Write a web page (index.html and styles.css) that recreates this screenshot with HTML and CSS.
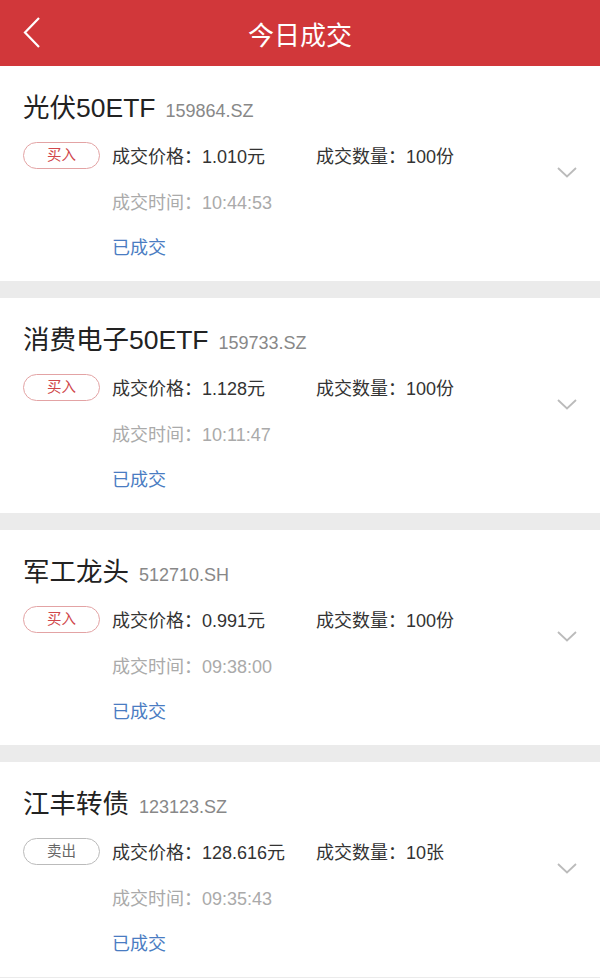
FILE: index.html
```html
<!DOCTYPE html>
<html lang="zh-CN">
<head>
  <meta charset="UTF-8" />
  <meta name="viewport" content="width=device-width, initial-scale=1.0" />
  <title>今日成交</title>
  <link rel="stylesheet" href="styles.css">
</head>
<body>
  <div class="topbar">
    <a class="back" href="#">
      <svg width="20" height="32" viewBox="0 0 20 32"><polyline points="16,1 2,15.5 16,30" fill="none" stroke="#fff" stroke-width="2.2"/></svg>
    </a>
    <h1>今日成交</h1>
    <span></span>
  </div>

  <div class="deal">
    <div class="deal-main">
      <div class="deal-title"><span class="name">光伏50ETF</span><span class="code">159864.SZ</span></div>
      <div class="deal-row"><span class="side buy">买入</span><span class="price">成交价格：1.010元</span><span>成交数量：100份</span></div>
      <div class="deal-row sub time">成交时间：10:44:53</div>
      <div class="deal-row sub status">已成交</div>
    </div>
    <svg class="more" width="20" height="11" viewBox="0 0 20 11"><polyline points="1,1 10,9.5 19,1" fill="none" stroke="#bbb" stroke-width="1.8"/></svg>
  </div>

  <div class="deal">
    <div class="deal-main">
      <div class="deal-title"><span class="name">消费电子50ETF</span><span class="code">159733.SZ</span></div>
      <div class="deal-row"><span class="side buy">买入</span><span class="price">成交价格：1.128元</span><span>成交数量：100份</span></div>
      <div class="deal-row sub time">成交时间：10:11:47</div>
      <div class="deal-row sub status">已成交</div>
    </div>
    <svg class="more" width="20" height="11" viewBox="0 0 20 11"><polyline points="1,1 10,9.5 19,1" fill="none" stroke="#bbb" stroke-width="1.8"/></svg>
  </div>

  <div class="deal">
    <div class="deal-main">
      <div class="deal-title"><span class="name">军工龙头</span><span class="code">512710.SH</span></div>
      <div class="deal-row"><span class="side buy">买入</span><span class="price">成交价格：0.991元</span><span>成交数量：100份</span></div>
      <div class="deal-row sub time">成交时间：09:38:00</div>
      <div class="deal-row sub status">已成交</div>
    </div>
    <svg class="more" width="20" height="11" viewBox="0 0 20 11"><polyline points="1,1 10,9.5 19,1" fill="none" stroke="#bbb" stroke-width="1.8"/></svg>
  </div>

  <div class="deal">
    <div class="deal-main">
      <div class="deal-title"><span class="name">江丰转债</span><span class="code">123123.SZ</span></div>
      <div class="deal-row"><span class="side sell">卖出</span><span class="price">成交价格：128.616元</span><span>成交数量：10张</span></div>
      <div class="deal-row sub time">成交时间：09:35:43</div>
      <div class="deal-row sub status">已成交</div>
    </div>
    <svg class="more" width="20" height="11" viewBox="0 0 20 11"><polyline points="1,1 10,9.5 19,1" fill="none" stroke="#bbb" stroke-width="1.8"/></svg>
  </div>
</body>
</html>
```

FILE: styles.css
```css
body {
  margin: 0;
  font-family: "Liberation Sans", "Noto Sans CJK SC", sans-serif;
  background-color: #ebebeb;
  color: #333;
}
.topbar {
  height: 66px;
  background-color: #d1373a;
  display: grid;
  grid-template-columns: 66px 1fr 66px;
  align-items: center;
}
.back {
  display: flex;
  padding-left: 23px;
}
.topbar h1 {
  margin: 0;
  text-align: center;
  color: #fff;
  font-size: 26px;
  font-weight: normal;
}
.deal {
  background-color: #fff;
  display: flex;
  align-items: center;
  padding: 27px 23px 21px 23px;
  margin-bottom: 17px;
}
.deal-main {
  flex: 1;
}
.deal-title {
  height: 30px;
  line-height: 30px;
  white-space: nowrap;
}
.name {
  font-size: 26.5px;
  color: #222;
}
.code {
  font-size: 18px;
  color: #888;
  margin-left: 10px;
}
.deal-row {
  display: flex;
  align-items: center;
  height: 28px;
  margin-top: 18px;
  font-size: 18px;
  white-space: nowrap;
}
.deal-row.sub {
  padding-left: 89px;
}
.deal-row.status {
  margin-top: 17px;
}
.side {
  box-sizing: border-box;
  width: 77px;
  height: 27px;
  border-radius: 14px;
  border: 1px solid #e3a3a4;
  color: #d0474b;
  font-size: 14.5px;
  line-height: 25px;
  text-align: center;
  margin-right: 12px;
}
.side.sell {
  border-color: #bbb;
  color: #666;
}
.price {
  width: 204px;
}
.time {
  color: #aaa;
}
.status {
  color: #4a7cc2;
}
.more {
  flex: none;
  margin-bottom: 8px;
}
```
